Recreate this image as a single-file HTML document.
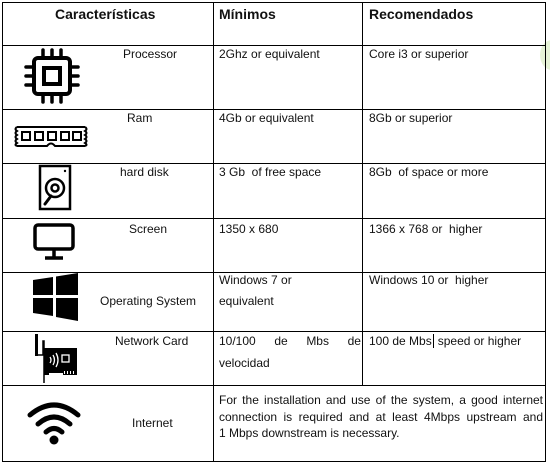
<!DOCTYPE html>
<html><head><meta charset="utf-8"><style>
html,body{margin:0;padding:0;background:#fff;width:550px;height:464px;overflow:hidden;position:relative;font-family:"Liberation Sans",Arial,sans-serif;color:#111}
.h{position:absolute;background:#000;height:1px}
.v{position:absolute;background:#000;width:1px}
.t{position:absolute;font-size:12px;line-height:14px;white-space:nowrap}
.b{position:absolute;font-size:14px;font-weight:bold;line-height:16px}
.j{text-align:justify;text-align-last:justify;white-space:nowrap}
svg{position:absolute}
</style></head><body>
<div style="position:absolute;left:540px;top:40px;width:24px;height:30px;border-radius:50%;background:#e6f3d6"></div>
<div class="h" style="left:2px;top:2px;width:544px"></div>
<div class="h" style="left:2px;top:45px;width:544px"></div>
<div class="h" style="left:2px;top:109px;width:544px"></div>
<div class="h" style="left:2px;top:163px;width:544px"></div>
<div class="h" style="left:2px;top:218px;width:544px"></div>
<div class="h" style="left:2px;top:272px;width:544px"></div>
<div class="h" style="left:2px;top:331px;width:544px"></div>
<div class="h" style="left:2px;top:385px;width:544px"></div>
<div class="h" style="left:2px;top:461px;width:544px"></div>
<div class="v" style="left:2px;top:2px;height:460px"></div>
<div class="v" style="left:213px;top:2px;height:460px"></div>
<div class="v" style="left:362px;top:2px;height:384px"></div>
<div class="v" style="left:545px;top:2px;height:460px"></div>

<div class="b" style="left:55px;top:6px">Características</div>
<div class="b" style="left:219px;top:6px">Mínimos</div>
<div class="b" style="left:369px;top:6px">Recomendados</div>

<div class="t" style="left:123px;top:47px">Processor</div>
<div class="t" style="left:219px;top:47px">2Ghz or equivalent</div>
<div class="t" style="left:369px;top:47px">Core i3 or superior</div>

<div class="t" style="left:127px;top:111px">Ram</div>
<div class="t" style="left:219px;top:111px">4Gb or equivalent</div>
<div class="t" style="left:369px;top:111px">8Gb or superior</div>

<div class="t" style="left:120px;top:165px">hard disk</div>
<div class="t" style="left:219px;top:165px">3 Gb&nbsp; of free space</div>
<div class="t" style="left:369px;top:165px">8Gb&nbsp; of space or more</div>

<div class="t" style="left:129px;top:222px">Screen</div>
<div class="t" style="left:219px;top:222px">1350 x 680</div>
<div class="t" style="left:369px;top:222px">1366 x 768 or&nbsp; higher</div>

<div class="t" style="left:100px;top:294px">Operating System</div>
<div class="t" style="left:219px;top:273px">Windows 7 or</div>
<div class="t" style="left:219px;top:294px">equivalent</div>
<div class="t" style="left:369px;top:273px">Windows 10 or&nbsp; higher</div>

<div class="t" style="left:115px;top:334px">Network Card</div>
<div class="t" style="left:219px;top:334px;width:142px;display:flex;justify-content:space-between"><span>10/100</span><span>de</span><span>Mbs</span><span>de</span></div>
<div class="t" style="left:219px;top:356px">velocidad</div>
<div class="t" style="left:369px;top:334px">100 de Mbs<span style="border-left:1px solid #000;margin:0 4px 0 1px"></span>speed or higher</div>

<div class="t" style="left:132px;top:416px">Internet</div>
<div style="position:absolute;left:219px;top:392px;width:324px;font-size:12px;line-height:16.5px">
<div class="j">For the installation and use of the system, a good internet</div>
<div class="j">connection is required and at least 4Mbps upstream and</div>
<div>1 Mbps downstream is necessary.</div>
</div>

<svg style="left:24px;top:48px" width="56" height="56" viewBox="0 0 56 56">
<rect x="10" y="10" width="36" height="36" rx="4" fill="none" stroke="#000" stroke-width="4"/>
<rect x="20" y="20" width="16" height="16" fill="none" stroke="#000" stroke-width="4"/>
<g stroke="#000" stroke-width="3.5" stroke-linecap="round">
<line x1="19" y1="2" x2="19" y2="10"/><line x1="28" y1="2" x2="28" y2="10"/><line x1="37" y1="2" x2="37" y2="10"/>
<line x1="19" y1="46" x2="19" y2="54"/><line x1="28" y1="46" x2="28" y2="54"/><line x1="37" y1="46" x2="37" y2="54"/>
<line x1="2" y1="19" x2="10" y2="19"/><line x1="2" y1="28" x2="10" y2="28"/><line x1="2" y1="37" x2="10" y2="37"/>
<line x1="46" y1="19" x2="54" y2="19"/><line x1="46" y1="28" x2="54" y2="28"/><line x1="46" y1="37" x2="54" y2="37"/>
</g></svg>
<svg style="left:13px;top:125px" width="76" height="24" viewBox="0 0 76 24">
<path d="M4 2 H72 M4 21 H34 Q38 16 42 21 H72" fill="none" stroke="#000" stroke-width="2"/>
<path d="M4 2 q-3 2 0 4 q-3 2 0 4 q-3 2 0 4 q-3 2 0 4 q-3 2 0 3 M72 2 q3 2 0 4 q3 2 0 4 q3 2 0 4 q3 2 0 4 q3 2 0 3" fill="none" stroke="#000" stroke-width="2"/>
<g fill="none" stroke="#000" stroke-width="2"><rect x="9" y="7" width="8" height="8"/><rect x="22" y="7" width="8" height="8"/><rect x="35" y="7" width="8" height="8"/><rect x="48" y="7" width="8" height="8"/><rect x="60" y="7" width="8" height="8"/></g>
</svg>
<svg style="left:38px;top:164px" width="34" height="47" viewBox="0 0 34 47">
<rect x="2" y="2" width="30" height="43" fill="none" stroke="#000" stroke-width="2.5"/>
<circle cx="27" cy="7" r="1.2" fill="#000"/>
<circle cx="17" cy="24" r="9" fill="none" stroke="#000" stroke-width="2.5"/>
<circle cx="17" cy="24" r="3.5" fill="none" stroke="#000" stroke-width="2.5"/>
<path d="M13 32 L7 40" stroke="#000" stroke-width="3" stroke-linecap="round"/>
</svg>
<svg style="left:33px;top:223px" width="42" height="38" viewBox="0 0 42 38">
<rect x="2" y="2" width="38" height="24" rx="3" fill="none" stroke="#000" stroke-width="3.5"/>
<path d="M21 26 V34 M12 35 H30" stroke="#000" stroke-width="3.5"/>
</svg>
<svg style="left:33px;top:273px" width="46" height="48" viewBox="0 0 46 48">
<path d="M0 7 L20 4 V22 H0Z M23 3.5 L45 0 V22 H23Z M0 25 H20 V43 L0 40Z M23 25 H45 V48 L23 44Z" fill="#000"/>
</svg>
<svg style="left:33px;top:333px" width="46" height="52" viewBox="0 0 46 52">
<rect x="2" y="1" width="3" height="22" fill="#000"/>
<path d="M5 22 H10 V8 H11 V50" fill="none" stroke="#000" stroke-width="1.5"/>
<path d="M11 15 H44 V42 H30 V40 H16 V42 H11Z" fill="#000"/>
<g fill="none" stroke="#fff" stroke-width="1.3"><path d="M17 24 q2 3 0 6"/><path d="M20 22 q3 5 0 10"/><path d="M23 20 q4 7 0 14"/><rect x="29" y="22" width="7" height="7"/></g>
<g fill="#fff"><rect x="31" y="38" width="1" height="3"/><rect x="34" y="38" width="1" height="3"/><rect x="37" y="38" width="1" height="3"/><rect x="40" y="38" width="1" height="3"/></g>
</svg>
<svg style="left:27px;top:400px" width="54" height="46" viewBox="0 0 54 46">
<g fill="none" stroke="#000" stroke-width="5" stroke-linecap="round">
<path d="M3 15 Q27 -5 51 15"/><path d="M11 24 Q27 10 43 24"/><path d="M19 32 Q27 25 35 32"/>
</g>
<circle cx="27" cy="40" r="4.5" fill="#000"/>
</svg>
</body></html>
